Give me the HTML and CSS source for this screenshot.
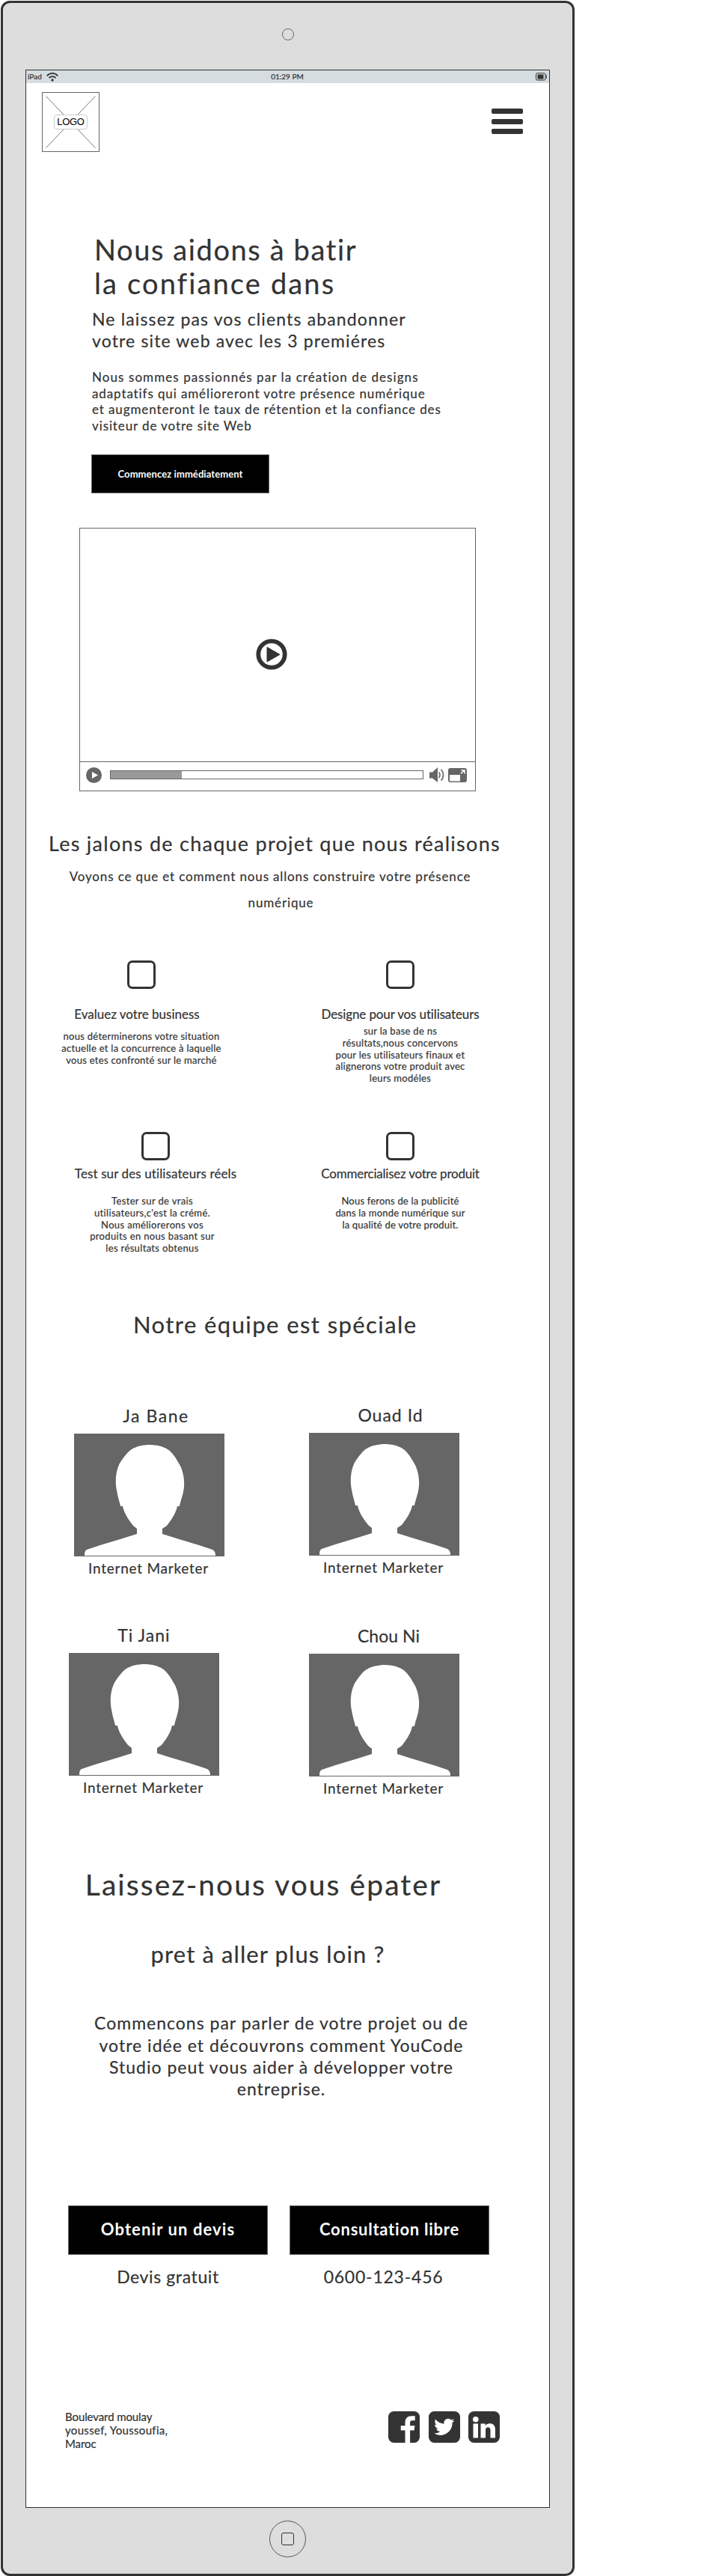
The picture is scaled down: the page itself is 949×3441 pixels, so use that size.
FILE: index.html
```html
<!DOCTYPE html>
<html lang="fr">
<head>
<meta charset="utf-8">
<title>Agence web</title>
<link rel="stylesheet" href="styles.css">
</head>
<body>
<svg class="defs" width="0" height="0" aria-hidden="true">
  <symbol id="avatar" viewBox="0 0 201 164" preserveAspectRatio="none">
    <rect width="201" height="164" fill="#666"/>
    <path fill="#fff" d="M14 163C14 158 15 156 17 155L35 149 65 140 84 134V127L79 123C73 115 67 107 65 97H62C61 91 58 83 57.500 78 54 64 56 48 62 38 66 32 72 24 77 21 83 17 92 15 101 15 110 15 119 17 125 21 130 24 136 32 139 38 146 48 149 64 146 78 145 83 142 91 141 97H138C136 107 130 115 124 123L118 127V134L137 140 167 149 185 155C188 157 189 159 189 163Z"/>
  </symbol>
</svg>
<div class="device">
  <div class="camera"></div>
  <div class="screen">
    <div class="status">
      <div class="status-left"><span class="carrier">iPad</span>
        <svg width="16" height="12" viewBox="0 0 16 12"><g fill="none" stroke="#333" stroke-width="1.8"><path d="M.7 4.300C5-.2 11-.2 15.300 4.300"/><path d="M3.500 7.200c2.700-2.900 6.300-2.900 9 0"/></g><circle cx="8" cy="10" r="1.700" fill="#333"/></svg>
      </div>
      <span class="clock">01:29 PM</span>
      <svg class="battery" width="15" height="11" viewBox="0 0 15 11"><rect x=".5" y=".8" width="12.500" height="9.200" rx="1.500" fill="none" stroke="#333"/><rect x="2.500" y="2.500" width="8" height="6" fill="#333"/><path d="M13.500 3c1.500 1 1.500 4 0 5" fill="none" stroke="#333"/></svg>
    </div>
    <header class="topbar">
      <div class="logo">
        <svg width="75" height="78" viewBox="0 0 75 78"><path d="M4.500 4.500l66 69M70.500 4.500l-66 69" stroke="#777" fill="none"/></svg>
        <span class="logo-label">LOGO</span>
      </div>
      <div class="menu"><i></i><i></i><i></i></div>
    </header>

    <section class="hero">
      <h1>Nous aidons à batir<br><span class="wide">la confiance dans</span></h1>
      <p class="lead">Ne laissez pas vos clients abandonner<br>votre site web avec les 3 premiéres</p>
      <p class="intro"><span class="first">Nous sommes passionnés par la création de designs</span><br>adaptatifs qui amélioreront votre présence numérique<br>et augmenteront le taux de rétention et la confiance des<br>visiteur de votre site Web</p>
      <a class="btn btn-small">Commencez immédiatement</a>
    </section>

    <div class="video">
      <div class="video-view">
        <svg width="42" height="42" viewBox="0 0 42 42"><circle cx="21" cy="21" r="17.700" fill="none" stroke="#333" stroke-width="5.800"/><path d="M15 11.500v19.500l17-9.700z" fill="#333" stroke="#333" stroke-linejoin="round"/></svg>
      </div>
      <div class="video-bar">
        <svg width="21" height="21" viewBox="0 0 21 21"><circle cx="10.500" cy="10.500" r="10.500" fill="#666"/><path d="M8 6v9l8-4.500z" fill="#fff"/></svg>
        <div class="track"><div class="played"></div></div>
        <svg class="speaker" width="20" height="20" viewBox="0 0 20 20"><path d="M0 6.500h4L11 0v20l-7-5.500H0z" fill="#666"/><g fill="none" stroke="#666" stroke-width="1.700"><path d="M12.500 6.500c2 2 2 5.500 0 7.500"/><path d="M15.500 3c4 4 4 10.500 0 14.500"/></g></svg>
        <svg width="25" height="19" viewBox="0 0 25 19"><rect width="25" height="19" rx="3" fill="#666"/><path d="M2 9h14v8.500H3q-1 0-1-1z" fill="#fff"/><path d="M17 7.500l4-4M17.500 3h4.500v4.500" fill="none" stroke="#fff" stroke-width="1.500"/></svg>
      </div>
    </div>

    <section class="steps">
      <h2>Les jalons de chaque projet que nous réalisons</h2>
      <p class="steps-sub">Voyons ce que et comment nous allons construire votre présence<br><span class="tail">numérique</span></p>
      <div class="step-grid">
        <div class="step step-a"><i class="box"></i><h3>Evaluez votre business</h3><p>nous déterminerons votre situation<br>actuelle et la concurrence à laquelle<br>vous etes confronté sur le marché</p></div>
        <div class="step step-b"><i class="box"></i><h3>Designe pour vos utilisateurs</h3><p>sur la base de ns<br>résultats,nous concervons<br>pour les utilisateurs finaux et<br>alignerons votre produit avec<br>leurs modéles</p></div>
        <div class="step step-c"><i class="box"></i><h3>Test sur des utilisateurs réels</h3><p>Tester sur de vrais<br>utilisateurs,c'est la crémé.<br>Nous améliorerons vos<br>produits en nous basant sur<br>les résultats obtenus</p></div>
        <div class="step step-d"><i class="box"></i><h3>Commercialisez votre produit</h3><p>Nous ferons de la publicité<br>dans la monde numérique sur<br>la qualité de votre produit.</p></div>
      </div>
    </section>

    <section class="team">
      <h2>Notre équipe est spéciale</h2>
      <div class="team-grid">
        <div class="member m-ja"><h4>Ja Bane</h4><svg class="photo"><use href="#avatar"/></svg><p>Internet Marketer</p></div>
        <div class="member m-ouad"><h4>Ouad Id</h4><svg class="photo"><use href="#avatar"/></svg><p>Internet Marketer</p></div>
        <div class="member m-ti"><h4>Ti Jani</h4><svg class="photo"><use href="#avatar"/></svg><p>Internet Marketer</p></div>
        <div class="member m-chou"><h4>Chou Ni</h4><svg class="photo"><use href="#avatar"/></svg><p>Internet Marketer</p></div>
      </div>
    </section>

    <section class="cta">
      <h2>Laissez-nous vous épater</h2>
      <h3>pret à aller plus loin ?</h3>
      <p>Commencons par parler de votre projet ou de<br>votre idée et découvrons comment YouCode<br>Studio peut vous aider à développer votre<br>entreprise.</p>
      <div class="cta-row">
        <div><a class="btn btn-large">Obtenir un devis</a><span class="note">Devis gratuit</span></div>
        <div><a class="btn btn-large btn-tight">Consultation libre</a><span class="note note-phone">0600-123-456</span></div>
      </div>
    </section>

    <footer class="footer">
      <address>Boulevard moulay<br><span class="city">youssef, Youssoufia,</span><br>Maroc</address>
      <div class="social">
        <svg width="42" height="42" viewBox="0 0 42 42"><rect width="42" height="42" rx="7.500" fill="#333"/><path d="M22.500 42V25.500h-5.800v-6.300h5.800v-4c0-6 3.300-9 8.600-9h4.600v6h-3.400c-2.700 0-3.200 1.300-3.200 3.200v3.800h6.300l-.8 6.300h-5.500V42z" fill="#fff"/></svg>
        <svg width="42" height="42" viewBox="0 0 42 42"><rect width="42" height="42" rx="7.500" fill="#333"/><path transform="translate(7.200 7.300) scale(1.130)" d="M24 4.560a9.800 9.800 0 0 1-2.830.77 4.930 4.930 0 0 0 2.170-2.720 9.900 9.900 0 0 1-3.130 1.200 4.920 4.920 0 0 0-8.380 4.480A13.980 13.980 0 0 1 1.670 3.150a4.930 4.930 0 0 0 1.520 6.570 4.900 4.900 0 0 1-2.230-.61 4.930 4.930 0 0 0 3.950 4.890 4.930 4.930 0 0 1-2.220.08 4.930 4.930 0 0 0 4.600 3.420A9.870 9.870 0 0 1 0 19.540a13.940 13.940 0 0 0 7.550 2.210c9.140 0 14.300-7.720 13.990-14.640A10 10 0 0 0 24 4.560z" fill="#fff"/></svg>
        <svg width="42" height="42" viewBox="0 0 42 42"><rect width="42" height="42" rx="7.500" fill="#333"/><circle cx="9.800" cy="10.700" r="3.800" fill="#fff"/><path d="M6.500 16.500H13v19H6.500zM16.500 16.500h6.200v2.600c3-4.500 13.300-4.500 13.300 5v11.400h-6.500V25c0-5-6.500-5-6.500 0v10.500h-6.500z" fill="#fff"/></svg>
      </div>
    </footer>
  </div>
  <div class="home"><i></i></div>
</div>
</body>
</html>
```

FILE: styles.css
```css
* { box-sizing: border-box; }
body { margin: 0; background: #fff; color: #333; font-family: Lato, "Liberation Sans", sans-serif; height: 3441px; overflow: hidden; }
h1, h2, h3, h4, p { margin: 0; font-weight: 400; }
h1, h2, h3, h4, p, .note, address { -webkit-text-stroke: .2px #333; }
svg { display: block; flex: none; }
.defs { position: absolute; }

/* Tablet shell */
.device { width: 767px; height: 3440px; margin: 1px 0 0 1px; background: #ddd; border: 3px solid #333; border-radius: 12px; padding: 34px 30px 0; display: flex; flex-direction: column; align-items: center; }
.camera { width: 16px; height: 16px; border: 1px solid #666; border-radius: 50%; flex: none; }
.screen { width: 701px; height: 3257px; margin-top: 39px; background: #fff; border: 1px solid #333; flex: none; align-self: flex-start; white-space: nowrap; }
.home { width: 49px; height: 49px; margin-top: 17px; border: 1px solid #555; border-radius: 50%; display: flex; align-items: center; justify-content: center; flex: none; }
.home i { width: 17px; height: 17px; border: 1px solid #333; border-radius: 3px; }

/* Status bar */
.status { height: 17px; background: #d6dde0; display: grid; grid-template-columns: 1fr auto 1fr; align-items: center; padding: 0 3px 0 2px; font-size: 10px; line-height: 17px; -webkit-text-stroke: .2px #333; }
.status-left { display: flex; align-items: center; gap: 6px; }
.battery { justify-self: end; }

/* Top bar */
.topbar { height: 92px; padding: 12px 35px 0 21px; display: flex; justify-content: space-between; }
.logo { width: 77px; height: 80px; border: 1px solid #666; display: grid; place-items: center; }
.logo > * { grid-area: 1 / 1; }
.logo-label { position: relative; width: 45px; height: 20px; border: 1px solid #ccc; border-radius: 4px; background: rgba(255, 255, 255, .85); color: #000; text-align: center; font: 13px/17px "Liberation Sans", sans-serif; letter-spacing: -.300px; }
.menu { width: 42px; padding-top: 22px; display: flex; flex-direction: column; gap: 6.500px; }
.menu i { height: 7px; background: #333; border-radius: 2px; }

/* Hero */
.hero { padding: 108px 0 0 87px; }
.hero h1 { padding-left: 4px; font-size: 38px; line-height: 45px; letter-spacing: 1.600px; }
.hero h1 .wide { letter-spacing: 2.150px; }
.lead { margin-top: 11px; padding-left: 1px; font-size: 23px; line-height: 29px; letter-spacing: 1.140px; }
.intro { margin-top: 23px; padding-left: 1px; font-size: 17px; line-height: 21.600px; letter-spacing: .890px; }
.intro .first { letter-spacing: 1.080px; }
.btn { display: flex; align-items: center; justify-content: center; background: #000; border: 1px solid #666; color: #fff; font-weight: 700; }
.btn-small { width: 238px; height: 52px; margin-top: 27.600px; font-size: 13px; letter-spacing: .080px; }

/* Video player */
.video { width: 530px; height: 352px; margin: 46px 0 0 71px; border: 1px solid #666; display: flex; flex-direction: column; }
.video-view { flex: 1; padding: 147px 0 0 235px; }
.video-bar { height: 39px; border-top: 1px solid #666; display: flex; align-items: center; padding: 0 11px 3px 8px; }
.track { width: 419px; height: 12px; margin-left: 11px; border: 1px solid #666; }
.played { width: 95px; height: 10px; background: #999; }
.speaker { margin: 0 5px 0 8px; }

/* Steps */
.steps { padding-top: 52px; text-align: center; }
.steps h2 { width: 604px; margin-left: 30px; font-size: 27px; line-height: 36px; letter-spacing: 1.260px; }
.steps-sub { width: 540px; margin: 8px 0 0 56px; font-size: 17px; line-height: 35px; letter-spacing: .860px; }
.tail { padding-left: 29px; }
.step-grid { margin: 60px 0 0 44px; display: grid; grid-template-columns: 220px 220px; column-gap: 126px; grid-template-rows: 229px 163px; }
.step { display: flex; flex-direction: column; align-items: center; }
.box { width: 38px; height: 38px; border: 3px solid #333; border-radius: 7px; flex: none; }
.step h3 { margin-top: 23px; font-size: 17px; line-height: 22px; letter-spacing: 0; }
.step p { margin-top: 11px; font-size: 13px; line-height: 15.800px; letter-spacing: .280px; }
.step-a h3 { margin-right: 12px; }
.step-b h3 { letter-spacing: -.130px; }
.step-b p { margin-top: 4px; }
.step-c { padding-left: 38px; }
.step-c h3, .step-d h3 { margin-top: 7px; }
.step-c p, .step-d p { margin-top: 18px; }
.step-c h3 { letter-spacing: .110px; }
.step-c p { margin-right: 9px; letter-spacing: .350px; }
.step-d h3 { letter-spacing: -.230px; }
.step-d p { letter-spacing: .200px; }

/* Team */
.team { padding-top: 74px; }
.team h2 { margin-left: 143px; font-size: 31px; line-height: 40px; letter-spacing: 1.420px; }
.team-grid { margin: 88px 0 0 57px; display: grid; grid-template-columns: 201px 201px; grid-template-rows: 229px 229px; column-gap: 120px; row-gap: 64px; }
.member { width: 201px; text-align: center; }
.member h4 { font-size: 23px; line-height: 28px; letter-spacing: 1px; }
.photo { width: 201px; height: 164px; margin-top: 10px; }
.member p { margin-top: 4px; font-size: 19px; line-height: 24px; letter-spacing: .760px; padding-right: 2px; }
.m-ja { margin-left: 7px; }
.m-ja h4 { padding-left: 18px; letter-spacing: 1.550px; }
.m-ouad { margin-top: -1px; }
.m-ouad h4 { padding-left: 17px; }
.m-chou { margin-top: 1px; }
.m-chou h4 { padding-left: 12px; letter-spacing: .050px; }

/* Call to action */
.cta { padding-top: 94px; text-align: center; }
.cta h2 { width: 478px; margin-left: 78px; font-size: 39px; line-height: 48px; letter-spacing: 2.050px; }
.cta h3 { width: 316px; margin: 49px 0 0 165px; font-size: 31px; line-height: 40px; letter-spacing: 1.100px; }
.cta p { width: 504px; margin: 58.500px 0 0 89px; font-size: 23px; line-height: 29.300px; letter-spacing: 1px; }
.cta-row { margin: 140.300px 0 0 56px; display: flex; gap: 29px; }
.btn-large { width: 267px; height: 66px; padding-bottom: 2px; font-size: 22px; letter-spacing: 1.100px; }
.btn-tight { letter-spacing: .750px; }
.note { display: block; margin-top: 15px; font-size: 23px; line-height: 28px; letter-spacing: .610px; }
.note-phone { padding-right: 16px; letter-spacing: .770px; }

/* Footer */
.footer { padding: 164px 66px 0 52px; display: flex; justify-content: space-between; }
.footer address { font-style: normal; font-size: 15px; line-height: 18px; letter-spacing: -.100px; }
.footer .city { letter-spacing: .320px; }
.social { padding-top: 2px; display: flex; gap: 11.500px; }
```
